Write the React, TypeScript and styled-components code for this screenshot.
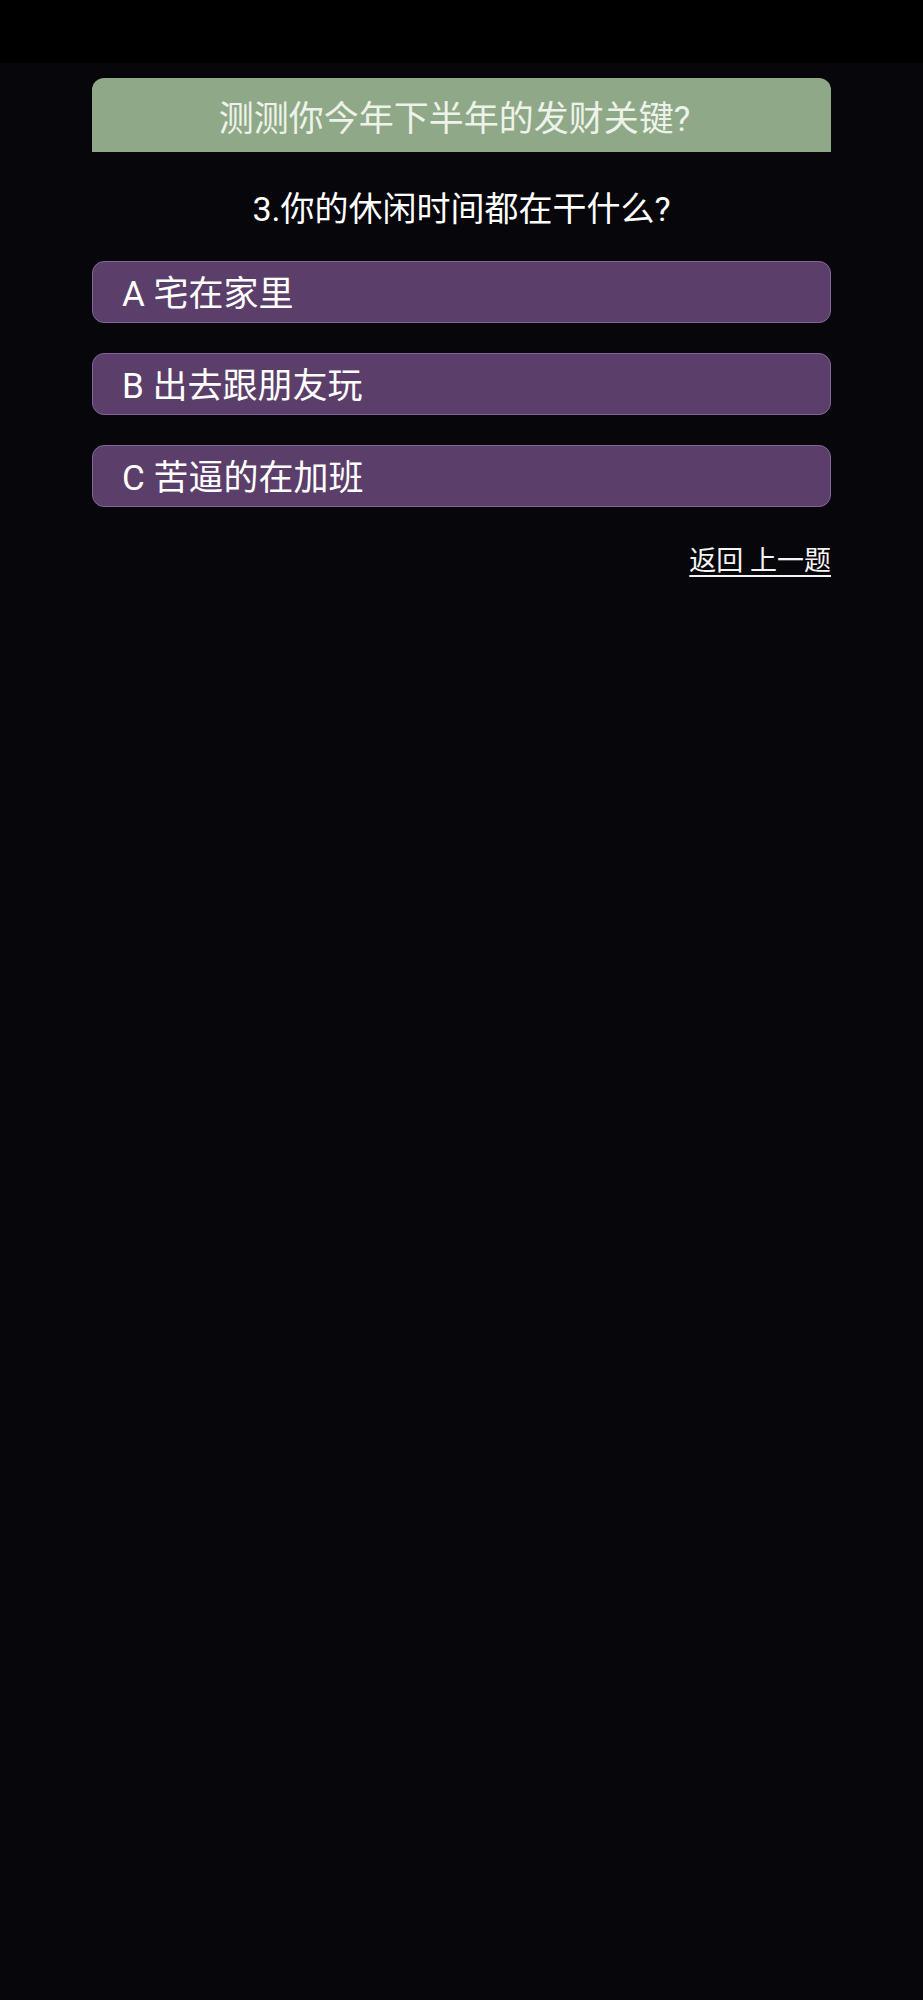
import React from 'react';
import styled, { createGlobalStyle } from 'styled-components';

const GlobalStyle = createGlobalStyle`
  html, body {
    margin: 0;
    padding: 0;
    background: #07060b;
  }
  body {
    font-family: Roboto, "Noto Sans CJK SC", sans-serif;
    color: #ffffff;
  }
`;

const StatusBar = styled.div`
  height: 63px;
  background: #000000;
`;

const Page = styled.main`
  min-height: 1937px;
  background: #07060b;
  padding: 15px 92px 0;
  box-sizing: border-box;
`;

const Banner = styled.h1`
  margin: 0;
  height: 74px;
  padding-right: 14px;
  display: flex;
  align-items: center;
  justify-content: center;
  background: #8fa888;
  border-radius: 12px 12px 0 0;
  color: #eef3ea;
  font-size: 35px;
  font-weight: 400;
`;

const Question = styled.h2`
  margin: 0;
  height: 109px;
  display: flex;
  align-items: center;
  justify-content: center;
  font-size: 34px;
  font-weight: 400;
  color: #ffffff;
`;

const Options = styled.div`
  display: flex;
  flex-direction: column;
  gap: 30px;
`;

const Option = styled.button`
  height: 62px;
  display: flex;
  align-items: center;
  padding: 0 0 3px 29px;
  box-sizing: border-box;
  background: #5b3f6a;
  border: 1.5px solid #80649a;
  border-radius: 12px;
  color: #ffffff;
  font-family: inherit;
  font-size: 35px;
  text-align: left;
  cursor: pointer;
`;

const Footer = styled.div`
  display: flex;
  justify-content: flex-end;
  margin-top: 36px;
`;

const BackLink = styled.a`
  font-size: 27px;
  line-height: 36px;
  color: #f4f4f4;
  text-decoration: underline;
  text-underline-offset: 5px;
  text-decoration-thickness: 2px;
  cursor: pointer;
`;

const choices = [
  { key: 'A', label: '宅在家里' },
  { key: 'B', label: '出去跟朋友玩' },
  { key: 'C', label: '苦逼的在加班' },
];

export default function App() {
  return (
    <>
      <GlobalStyle />
      <StatusBar />
      <Page>
        <Banner>测测你今年下半年的发财关键?</Banner>
        <Question>3.你的休闲时间都在干什么?</Question>
        <Options>
          {choices.map(c => (
            <Option key={c.key}>
              {c.key} {c.label}
            </Option>
          ))}
        </Options>
        <Footer>
          <BackLink>返回&nbsp;上一题</BackLink>
        </Footer>
      </Page>
    </>
  );
}
